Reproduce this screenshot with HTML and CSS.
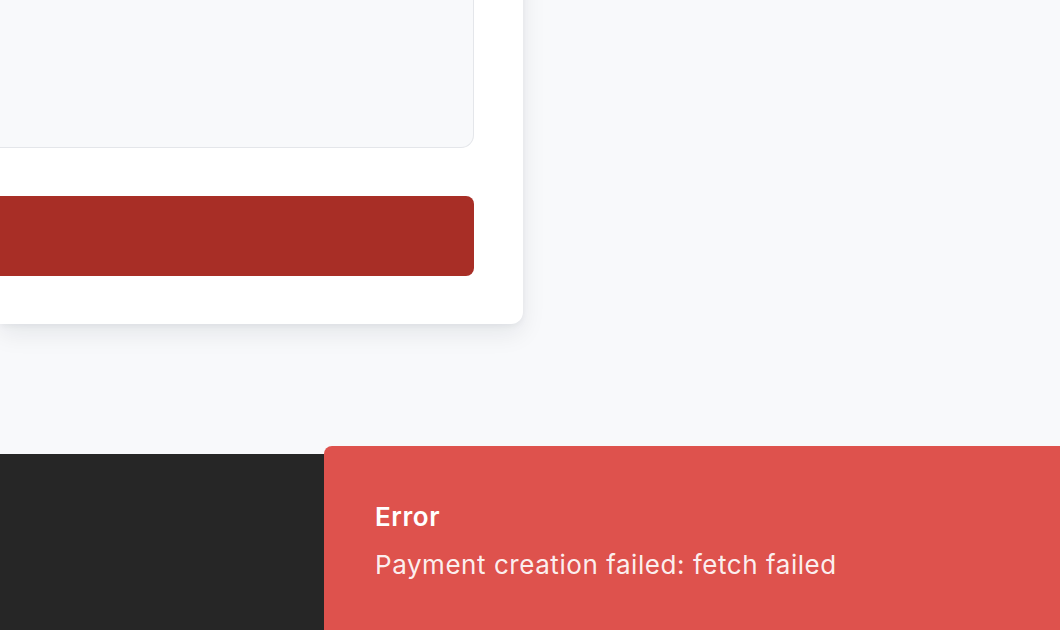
FILE: index.html
```html
<!DOCTYPE html>
<html lang="en">
<head>
<meta charset="utf-8">
<title>Payment</title>
<link rel="stylesheet" href="styles.css">
</head>
<body>
  <main class="main">
    <section class="card">
      <div class="card-box"></div>
      <button class="pay-button" type="button"></button>
    </section>
  </main>
  <footer class="footer"></footer>
  <div class="toast" role="alert">
    <div class="toast-title">Error</div>
    <div class="toast-message">Payment creation failed: fetch failed</div>
  </div>
</body>
</html>
```
FILE: styles.css
```css
* { box-sizing: border-box; }
html, body { margin: 0; padding: 0; }
body {
  font-family: Inter, "Noto Sans", sans-serif;
  background: #f8f9fb;
  height: 630px;
  overflow: hidden;
  display: flex;
  flex-direction: column;
}
.main {
  height: 454px;
  flex: none;
  background: #f8f9fb;
}
.card {
  width: 523px;
  margin-top: -60px;
  background: #ffffff;
  border-radius: 0 12px 12px 0;
  padding: 0 49px 48px 0;
  box-shadow: 0 10px 25px rgba(15, 23, 42, 0.08), 0 2px 6px rgba(15, 23, 42, 0.05);
  display: flex;
  flex-direction: column;
}
.card-box {
  height: 208px;
  background: #f8f9fb;
  border: 1px solid #e4e6ea;
  border-left: none;
  border-radius: 0 0 13px 0;
}
.pay-button {
  margin-top: 48px;
  height: 80px;
  border: none;
  background: #a82e26;
  border-radius: 0 8px 8px 0;
}
.footer {
  flex: 1;
  background: #262626;
}
.toast {
  position: fixed;
  left: 324px;
  top: 446px;
  width: 760px;
  height: 200px;
  background: #de524d;
  border-radius: 8px;
  padding: 53px 48px 0 51px;
  color: #ffffff;
}
.toast-title {
  font-size: 26px;
  font-weight: 600;
  line-height: 36px;
  letter-spacing: 0.6px;
}
.toast-message {
  font-size: 26px;
  line-height: 36px;
  margin-top: 12px;
  letter-spacing: 0.55px;
  color: rgba(255, 255, 255, 0.92);
}
```
